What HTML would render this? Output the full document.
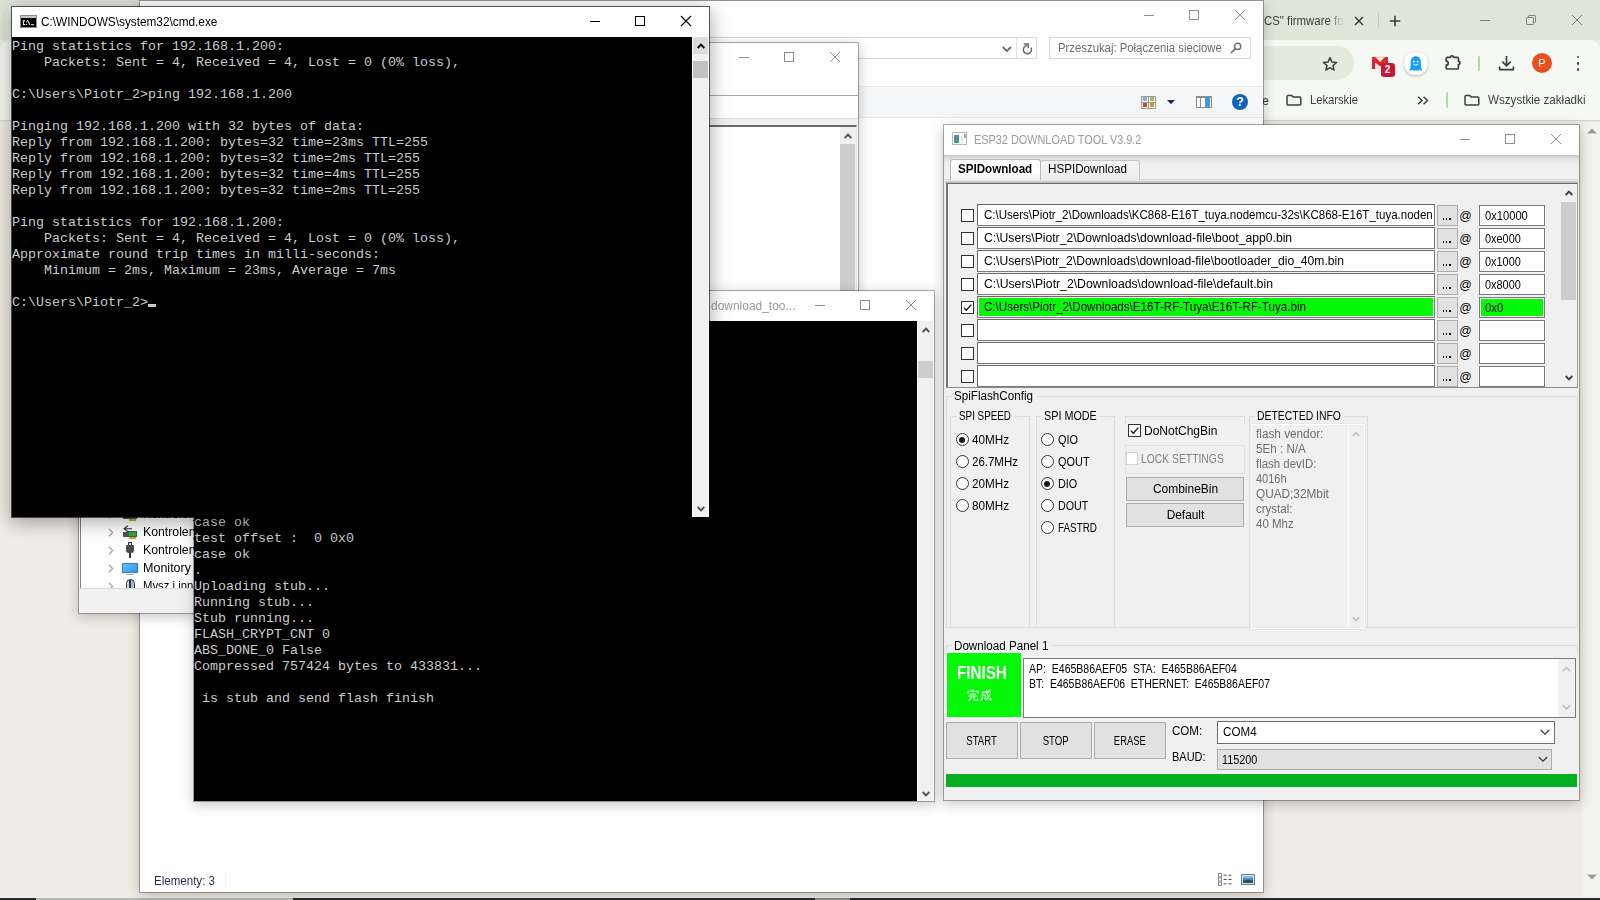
<!DOCTYPE html>
<html>
<head>
<meta charset="utf-8">
<title>desktop</title>
<style>
*{box-sizing:border-box;margin:0;padding:0}
html,body{width:1600px;height:900px;overflow:hidden;background:#f0ede6;font-family:"Liberation Sans",sans-serif;font-size:12px;color:#000}
.abs{position:absolute}
.layer{position:absolute}
.win{position:absolute;box-shadow:0 0 0 1px rgba(0,0,0,.30),0 3px 12px 1px rgba(0,0,0,.22)}
.clip{position:absolute;left:0;top:0;width:100%;height:100%;overflow:hidden}
.t{position:absolute;white-space:pre;font-family:"Liberation Sans",sans-serif}
.mono{font-family:"Liberation Mono",monospace;font-size:13.333px;line-height:16px;color:#ccc;white-space:pre}
svg{position:absolute;overflow:visible}
</style>
</head>
<body>
<div id="chrome" class="layer" style="left:0px;top:0px;width:1600px;height:900px;background:#f0ede6;">
<div class="clip">
<div class="abs" style="left:0px;top:0px;width:1600px;height:40px;background:#dfe6d8;"></div>
<div class="abs" style="left:6px;top:7px;width:240px;height:40px;background:#e9ede4;border-radius:9px 9px 0 0;"></div>
<div class="abs" style="left:0px;top:40px;width:1600px;height:80px;background:#f6f9f3;border-radius:10px 10px 0 0;"></div>
<div class="abs" style="left:0px;top:120px;width:1600px;height:1px;background:#d4d7cf;"></div>
<div class="abs" style="left:0px;top:121px;width:1600px;height:1px;background:#e6e5de;"></div>
<div class="abs" style="left:400px;top:46px;width:954px;height:34px;background:#e4ebdd;border-radius:17px;"></div>
<svg style="left:1322px;top:55.5px" width="16" height="16"><path d="M8 1.6L9.9 6l4.7.4-3.6 3.1 1.1 4.6L8 11.7 3.9 14.1 5 9.5 1.4 6.4 6.1 6z" fill="none" stroke="#3a4236" stroke-width="1.5" stroke-linejoin="round"/></svg>
<div class="t" style="left:1263.50px;top:12.50px;font-size:12.3px;line-height:16px;color:#3a4236;-webkit-mask-image:linear-gradient(90deg,#000 80%,transparent 100%);mask-image:linear-gradient(90deg,#000 80%,transparent 100%);transform:scaleX(0.9277);transform-origin:0 50%;">CS&quot; firmware fo</div>
<svg style="left:1354px;top:16px" width="10" height="10"><path d="M1 1L9 9M9 1L1 9" stroke="#3a4236" stroke-width="1.5"/></svg>
<div class="abs" style="left:1377.5px;top:12.5px;width:1.5px;height:15.5px;background:#c3cbbb;"></div>
<svg style="left:1389px;top:15px" width="12" height="12"><path d="M6 0.7V11.3M0.7 6H11.3" stroke="#3a4236" stroke-width="1.6"/></svg>
<svg style="left:1480px;top:15px" width="10" height="11"><path d="M0 5.5H10" stroke="#7b8475" stroke-width="1"/></svg>
<svg style="left:1526px;top:15px" width="10" height="10"><path d="M2.5 2.5V1.2Q2.5 0.5 3.2 0.5H8.8Q9.5 0.5 9.5 1.2V6.8Q9.5 7.5 8.8 7.5H7.5" fill="none" stroke="#7b8475"/><rect x="0.5" y="2.5" width="7" height="7" rx="0.8" fill="none" stroke="#7b8475"/></svg>
<svg style="left:1572px;top:15px" width="10" height="10"><path d="M0 0L10 10M10 0L0 10" stroke="#7b8475" stroke-width="1"/></svg>
<svg style="left:1372px;top:56.5px" width="16" height="12"><rect x="0.3" y="0.3" width="15.4" height="11.4" fill="#fbf3f3" stroke="#e9b7b7" stroke-width="0.6"/><path d="M0 0H3V12H0ZM13 0H16V12H13Z" fill="#d3222b"/><path d="M0 0H3.2L8 4.9 12.8 0H16V3L8 9.6 0 3Z" fill="#e0262f"/><path d="M3 0.2H13" stroke="#f2b4b4" stroke-width="0.8"/></svg>
<div class="abs" style="left:1380.5px;top:63px;width:14px;height:14px;background:#cc1530;border-radius:3px;"></div>
<div class="t" style="left:1384.72px;top:62.20px;font-size:10px;line-height:16px;font-weight:bold;color:#fff;">2</div>
<div class="abs" style="left:1404px;top:51.5px;width:23.5px;height:23.5px;background:#fff;border-radius:50%;box-shadow:0 1px 3px rgba(0,0,0,.28);"></div>
<svg style="left:1409px;top:55.5px" width="13.5" height="15.5"><path d="M6.75 0.3C3.4 0.3 1.6 2.8 1.6 6V10.3C1.6 12 0.8 13.2 0.2 14.2 1.6 14.8 2.6 14.4 3.3 13.7 4 14.7 5.2 15.1 6.75 14.2 8.3 15.1 9.5 14.7 10.2 13.7 10.9 14.4 11.9 14.8 13.3 14.2 12.7 13.2 11.9 12 11.9 10.3V6C11.9 2.8 10.1 0.3 6.75 0.3Z" fill="#1e9ff2"/><circle cx="4.9" cy="5.6" r="0.9" fill="#fff"/><circle cx="8.6" cy="5.6" r="0.9" fill="#fff"/><path d="M4.3 8.1Q6.75 10.4 9.2 8.1" fill="none" stroke="#fff" stroke-width="0.9"/></svg>
<svg style="left:1444px;top:53px" width="18" height="18"><path d="M2.2 5.4Q2.2 4.4 3.2 4.4H6.3a1.6 1.5 0 0 1 3.2 0H13.4Q14.4 4.4 14.4 5.4V8.3a1.6 1.6 0 0 1 0 3.2V15Q14.4 16 13.4 16H3.2Q2.2 16 2.2 15V12.2a2 2 0 0 0 0-4Z" fill="none" stroke="#3a4236" stroke-width="1.7" stroke-linejoin="round"/></svg>
<div class="abs" style="left:1478.3px;top:55.5px;width:1.8px;height:15.5px;background:#a9e09c;border-radius:1px;"></div>
<svg style="left:1497.5px;top:54.5px" width="17" height="17"><path d="M8.5 1V10.5M4.3 6.6L8.5 10.8 12.7 6.6" fill="none" stroke="#3a4236" stroke-width="1.7"/><path d="M1.6 11.5V14.6H15.4V11.5" fill="none" stroke="#3a4236" stroke-width="1.7" stroke-linejoin="round"/></svg>
<div class="abs" style="left:1532px;top:52.8px;width:20px;height:20px;background:#e8501f;border-radius:50%;"></div>
<div class="t" style="left:1538.33px;top:55.00px;font-size:11px;line-height:16px;color:#fff;">P</div>
<div class="abs" style="left:1576.6px;top:55.6px;width:2.8px;height:2.8px;background:#3a4236;border-radius:50%;"></div>
<div class="abs" style="left:1576.6px;top:61.8px;width:2.8px;height:2.8px;background:#3a4236;border-radius:50%;"></div>
<div class="abs" style="left:1576.6px;top:68px;width:2.8px;height:2.8px;background:#3a4236;border-radius:50%;"></div>
<div class="t" style="left:1262.00px;top:93.00px;font-size:12.3px;line-height:16px;color:#3a4236;">e</div>
<svg style="left:1286px;top:93.8px" width="16" height="12.5"><path d="M1 2.6Q1 1.4 2.2 1.4H5.6L7.3 3.1H13.6Q14.8 3.1 14.8 4.3V9.9Q14.8 11.1 13.6 11.1H2.2Q1 11.1 1 9.9Z" fill="none" stroke="#3a4236" stroke-width="1.5" stroke-linejoin="round"/></svg>
<div class="t" style="left:1310.40px;top:92.00px;font-size:12.3px;line-height:16px;color:#3a4236;transform:scaleX(0.9099);transform-origin:0 50%;">Lekarskie</div>
<svg style="left:1417px;top:96px" width="12" height="9"><path d="M1 0.8L5 4.5 1 8.2M6.5 0.8L10.5 4.5 6.5 8.2" fill="none" stroke="#3a4236" stroke-width="1.5"/></svg>
<div class="abs" style="left:1446.2px;top:92px;width:1.8px;height:15.5px;background:#a9e09c;border-radius:1px;"></div>
<svg style="left:1464px;top:93.8px" width="16" height="12.5"><path d="M1 2.6Q1 1.4 2.2 1.4H5.6L7.3 3.1H13.6Q14.8 3.1 14.8 4.3V9.9Q14.8 11.1 13.6 11.1H2.2Q1 11.1 1 9.9Z" fill="none" stroke="#3a4236" stroke-width="1.5" stroke-linejoin="round"/></svg>
<div class="t" style="left:1488.00px;top:92.00px;font-size:12.3px;line-height:16px;color:#3a4236;transform:scaleX(0.9447);transform-origin:0 50%;">Wszystkie zakładki</div>
<div class="abs" style="left:1583px;top:122px;width:17px;height:776px;background:#f2f2f1;"></div>
<svg style="left:1587px;top:128px" width="10" height="6"><path d="M0 5.5L5 0.5 10 5.5Z" fill="#9b9b98"/></svg>
<svg style="left:1587px;top:874px" width="10" height="6"><path d="M0 0.5L5 5.5 10 0.5Z" fill="#9b9b98"/></svg>
<div class="abs" style="left:0px;top:897.5px;width:1600px;height:2.5px;background:#2b2b2b;"></div>
<div class="abs" style="left:36px;top:897.5px;width:257px;height:2.5px;background:#b9b9b6;"></div>
<div class="abs" style="left:815px;top:897.5px;width:35px;height:2.5px;background:#8a8a88;"></div>
</div>
</div>
<div id="exp" class="win" style="left:140px;top:1px;width:1123px;height:891px;background:#fff;">
<div class="clip">
<svg style="left:1004px;top:9px" width="10" height="11"><path d="M0 5.5H10" stroke="#8e8e8e"/></svg>
<svg style="left:1049px;top:9px" width="10" height="10"><rect x="0.5" y="0.5" width="9" height="9" fill="none" stroke="#8e8e8e"/></svg>
<svg style="left:1095px;top:9px" width="10" height="10"><path d="M0 0L10 10M10 0L0 10" stroke="#8e8e8e"/></svg>
<div class="abs" style="left:360px;top:36px;width:537px;height:22px;background:#fff;border:1px solid #d9d9d9;"></div>
<div class="abs" style="left:876px;top:37px;width:1px;height:20px;background:#e5e5e5;"></div>
<svg style="left:862px;top:45px" width="10" height="7"><path d="M0.8 1L4.9 5 9 1" fill="none" stroke="#6a6a6a" stroke-width="1.8"/></svg>
<svg style="left:880.5px;top:41.5px" width="13" height="13"><path d="M6.4 2.5A4.1 4.1 0 1 0 10 4.6" fill="none" stroke="#6a6a6a" stroke-width="1.5"/><path d="M2.8 1H7.3V5.2" fill="none" stroke="#6a6a6a" stroke-width="1.5"/></svg>
<div class="abs" style="left:909px;top:36px;width:202px;height:22px;background:#fff;border:1px solid #d9d9d9;"></div>
<div class="t" style="left:918.20px;top:39.30px;font-size:12.3px;line-height:16px;color:#6d6d6d;transform:scaleX(0.9215);transform-origin:0 50%;">Przeszukaj: Połączenia sieciowe</div>
<svg style="left:1090px;top:41px" width="12" height="12"><circle cx="7.6" cy="4.4" r="3.1" fill="none" stroke="#6d6d6d" stroke-width="1.5"/><path d="M5.3 6.7L1 11" stroke="#6d6d6d" stroke-width="1.7"/></svg>
<div class="abs" style="left:1px;top:85px;width:1122px;height:32px;background:#f5f6f7;border-top:1px solid #e9eaec;border-bottom:1px solid #e6e7e9;"></div>
<div class="abs" style="left:1001px;top:94.5px;width:15px;height:13px;background:#fff;border:1px solid #9a9a9a;"></div>
<div class="abs" style="left:1008px;top:95px;width:1px;height:12px;background:#9a9a9a;"></div>
<div class="abs" style="left:1002px;top:100.5px;width:13px;height:1px;background:#9a9a9a;"></div>
<div class="abs" style="left:1002.8px;top:96.2px;width:4.4px;height:3.4px;background:#7fb2dc;"></div>
<div class="abs" style="left:1009.8px;top:96.2px;width:4.4px;height:3.4px;background:#a9b765;"></div>
<div class="abs" style="left:1002.8px;top:102.4px;width:4.4px;height:3.4px;background:#d8452c;"></div>
<div class="abs" style="left:1009.8px;top:102.4px;width:4.4px;height:3.4px;background:#c79a30;"></div>
<svg style="left:1026.5px;top:99px" width="8" height="4.5"><path d="M0 0H8L4 4.3Z" fill="#1f2a5c"/></svg>
<div class="abs" style="left:1056px;top:95px;width:16px;height:12px;background:#fff;border:1px solid #8c8c8c;border-top-width:2px;"></div>
<div class="abs" style="left:1060px;top:97px;width:1px;height:9px;background:#8c8c8c;"></div>
<div class="abs" style="left:1065.3px;top:96.2px;width:5px;height:9.8px;background:#3f98e2;"></div>
<div class="abs" style="left:1092px;top:92.8px;width:16.2px;height:16.2px;background:#0f63b6;border-radius:50%;"></div>
<div class="t" style="left:1096.34px;top:93.10px;font-size:12.3px;line-height:16px;font-weight:bold;color:#fff;">?</div>
<div class="t" style="left:14.00px;top:871.50px;font-size:12.3px;line-height:16px;color:#1e2f4f;transform:scaleX(0.9392);transform-origin:0 50%;">Elementy: 3</div>
<div class="abs" style="left:84.5px;top:871px;width:1px;height:16px;background:#f3f3f3;"></div>
<svg style="left:1078px;top:872px" width="16" height="14"><g fill="none" stroke="#8a8a8a" stroke-width="1"><rect x="0.5" y="0.5" width="3" height="3.4"/><rect x="0.5" y="4.8" width="3" height="3.4"/><rect x="0.5" y="9.1" width="3" height="3.4"/></g><path d="M5.5 2.2H8.5M10.5 2.2H13.5M5.5 6.5H8.5M10.5 6.5H13.5M5.5 10.8H8.5M10.5 10.8H13.5" stroke="#4a4a4a" stroke-width="1"/></svg>
<div class="abs" style="left:1101px;top:873px;width:14px;height:11px;background:#cfe3f5;border:1px solid #6f7f8f;"></div>
<div class="abs" style="left:1103px;top:875px;width:10px;height:7px;background:#4d7fae;background:linear-gradient(#9cc3e6 0,#5a8fc0 45%,#2f5a4a 60%,#2a4a6a 100%);"></div>
</div>
</div>
<div id="dev" class="win" style="left:79px;top:43px;width:779px;height:570px;background:#fff;">
<div class="clip">
<svg style="left:660px;top:9px" width="10" height="11"><path d="M0 5.5H10" stroke="#8e8e8e"/></svg>
<svg style="left:705px;top:9px" width="10" height="10"><rect x="0.5" y="0.5" width="9" height="9" fill="none" stroke="#8e8e8e"/></svg>
<svg style="left:751px;top:9px" width="10" height="10"><path d="M0 0L10 10M10 0L0 10" stroke="#8e8e8e"/></svg>
<div class="abs" style="left:0px;top:52px;width:779px;height:1px;background:#a8a8a8;"></div>
<div class="abs" style="left:0px;top:75px;width:779px;height:1px;background:#dcdcdc;"></div>
<div class="abs" style="left:0px;top:76px;width:779px;height:7px;background:#f0f0f0;"></div>
<div class="abs" style="left:1px;top:82px;width:777px;height:463px;background:#fff;border-top:2px solid #6b6b6b;border-left:1px solid #828282;border-right:1px solid #e3e3e3;"></div>
<div class="abs" style="left:761px;top:84px;width:16px;height:461px;background:#f0f0f0;"></div>
<div class="abs" style="left:761.3px;top:101px;width:14.6px;height:300px;background:#cdcdcd;"></div>
<svg style="left:765px;top:90.2px" width="8" height="6"><path d="M0.7 5L4 1.7L7.3 5" fill="none" stroke="#505050" stroke-width="1.9"/></svg>
<div class="abs" style="left:0px;top:545px;width:779px;height:25px;background:#f0f0f0;border-top:1px solid #dadada;"></div>
<svg style="left:29px;top:467px" width="6" height="9"><path d="M1 0.8L4.6 4.5 1 8.2" fill="none" stroke="#a6a6a6" stroke-width="1.3"/></svg>
<svg style="left:29px;top:485px" width="6" height="9"><path d="M1 0.8L4.6 4.5 1 8.2" fill="none" stroke="#a6a6a6" stroke-width="1.3"/></svg>
<svg style="left:29px;top:503px" width="6" height="9"><path d="M1 0.8L4.6 4.5 1 8.2" fill="none" stroke="#a6a6a6" stroke-width="1.3"/></svg>
<svg style="left:29px;top:521px" width="6" height="9"><path d="M1 0.8L4.6 4.5 1 8.2" fill="none" stroke="#a6a6a6" stroke-width="1.3"/></svg>
<svg style="left:29px;top:539px" width="6" height="9"><path d="M1 0.8L4.6 4.5 1 8.2" fill="none" stroke="#a6a6a6" stroke-width="1.3"/></svg>
<div class="t" style="left:64.40px;top:463.30px;font-size:12.3px;line-height:16px;color:#000;transform:scaleX(0.9972);transform-origin:0 50%;">Kontrolery</div>
<div class="t" style="left:64.40px;top:481.30px;font-size:12.3px;line-height:16px;color:#000;transform:scaleX(0.9972);transform-origin:0 50%;">Kontrolery</div>
<div class="t" style="left:64.40px;top:499.30px;font-size:12.3px;line-height:16px;color:#000;transform:scaleX(0.9972);transform-origin:0 50%;">Kontrolery</div>
<div class="t" style="left:64.40px;top:517.30px;font-size:12.3px;line-height:16px;color:#000;transform:scaleX(1.0177);transform-origin:0 50%;">Monitory</div>
<div class="t" style="left:64.40px;top:535.30px;font-size:12.3px;line-height:16px;color:#000;transform:scaleX(0.9201);transform-origin:0 50%;">Mysz i inne</div>
<div class="abs" style="left:49px;top:470px;width:9px;height:6px;background:#3d9a5a;border:1px solid #2a6e3f;"></div>
<div class="abs" style="left:50px;top:476px;width:7px;height:2px;background:#e0a020;"></div>
<div class="abs" style="left:44px;top:471px;width:5px;height:5px;background:#555;"></div>
<svg style="left:44px;top:463.5px" width="10" height="8"><path d="M5 0.7L1 3.7 5 6.7M1.5 3.7H9" fill="none" stroke="#333" stroke-width="1.1"/></svg>
<div class="abs" style="left:49px;top:488px;width:9px;height:6px;background:#3d9a5a;border:1px solid #2a6e3f;"></div>
<div class="abs" style="left:50px;top:494px;width:7px;height:2px;background:#e0a020;"></div>
<div class="abs" style="left:44px;top:489px;width:5px;height:5px;background:#555;"></div>
<svg style="left:44px;top:481.5px" width="10" height="8"><path d="M5 0.7L1 3.7 5 6.7M1.5 3.7H9" fill="none" stroke="#333" stroke-width="1.1"/></svg>
<div class="abs" style="left:48.5px;top:499px;width:4.6px;height:3.5px;background:#ddd;border:1px solid #333;"></div>
<div class="abs" style="left:47px;top:502px;width:7.6px;height:8px;background:#4a4a4a;border-radius:1px 1px 3px 3px;"></div>
<div class="abs" style="left:49.6px;top:510px;width:2.6px;height:4.5px;background:#333;"></div>
<div class="abs" style="left:43px;top:520px;width:16px;height:10px;background:#3aa0f0;border:1px solid #2b7fd0;background:linear-gradient(135deg,#6cc0ff,#2d93ea);"></div>
<div class="abs" style="left:47px;top:531px;width:8px;height:1px;background:#9aa;"></div>
<div class="abs" style="left:46.5px;top:536px;width:9px;height:14px;background:#cfd6e4;border:1.3px solid #333;border-radius:4.5px 4.5px 0 0;background:linear-gradient(90deg,#cfd6e4 0 33%,#2f3540 33% 60%,#aeb8cc 60%);"></div>
<div class="abs" style="left:2px;top:545px;width:777px;height:25px;background:#f0f0f0;border-top:1px solid #dadada;"></div>
</div>
</div>
<div id="con2" class="win" style="left:194px;top:291px;width:740px;height:510px;background:#fff;">
<div class="clip">
<div class="t" style="left:516.50px;top:7.20px;font-size:12.3px;line-height:16px;color:#999;transform:scaleX(0.9729);transform-origin:0 50%;">download_too...</div>
<svg style="left:621px;top:9px" width="10" height="11"><path d="M0 5.5H10" stroke="#8e8e8e"/></svg>
<svg style="left:666px;top:9px" width="10" height="10"><rect x="0.5" y="0.5" width="9" height="9" fill="none" stroke="#8e8e8e"/></svg>
<svg style="left:712px;top:9px" width="10" height="10"><path d="M0 0L10 10M10 0L0 10" stroke="#8e8e8e"/></svg>
<div class="abs" style="left:0px;top:30px;width:723px;height:480px;background:#000;"></div>
<div class="abs mono" style="left:0;top:224px">case ok
test offset :  0 0x0
case ok
.
Uploading stub...
Running stub...
Stub running...
FLASH_CRYPT_CNT 0
ABS_DONE_0 False
Compressed 757424 bytes to 433831...

 is stub and send flash finish</div>
<div class="abs" style="left:724.2px;top:30px;width:14.8px;height:480px;background:#f0f0f0;"></div>
<div class="abs" style="left:724.2px;top:70px;width:14.8px;height:16.6px;background:#cdcdcd;"></div>
<svg style="left:727.6px;top:36.2px" width="8" height="6"><path d="M0.7 5L4 1.7L7.3 5" fill="none" stroke="#505050" stroke-width="1.9"/></svg>
<svg style="left:727.6px;top:499.5px" width="8" height="6"><path d="M0.7 1L4 4.3L7.3 1" fill="none" stroke="#505050" stroke-width="1.9"/></svg>
</div>
</div>
<div id="esp" class="win" style="left:944px;top:125px;width:635px;height:675px;background:#f0f0f0;">
<div class="clip">
<div class="abs" style="left:0px;top:0px;width:635px;height:30px;background:#fff;"></div>
<div class="abs" style="left:8px;top:7px;width:15px;height:13px;background:#fbfbfb;border:1px solid #b8b8b8;"></div>
<div class="abs" style="left:10px;top:9.5px;width:5px;height:8.5px;background:#4f9a96;background:linear-gradient(#5a8aa8,#3c9c84);"></div>
<div class="abs" style="left:16.5px;top:9.5px;width:2.6px;height:8.5px;background:#e6e6e6;"></div>
<div class="abs" style="left:19.8px;top:9.3px;width:2px;height:4.2px;background:#9aa4a4;"></div>
<div class="t" style="left:29.60px;top:6.50px;font-size:12.3px;line-height:16px;color:#9a9a9a;transform:scaleX(0.8851);transform-origin:0 50%;">ESP32 DOWNLOAD TOOL V3.9.2</div>
<svg style="left:516px;top:9px" width="10" height="11"><path d="M0 5.5H10" stroke="#8e8e8e"/></svg>
<svg style="left:561px;top:9px" width="10" height="10"><rect x="0.5" y="0.5" width="9" height="9" fill="none" stroke="#8e8e8e"/></svg>
<svg style="left:607px;top:9px" width="10" height="10"><path d="M0 0L10 10M10 0L0 10" stroke="#8e8e8e"/></svg>
<div class="abs" style="left:0px;top:30px;width:635px;height:9px;background:linear-gradient(#c6c6c6,#e4e4e4 45%,#f0f0f0);"></div>
<div class="abs" style="left:1px;top:54px;width:633px;height:1px;background:#d9d9d9;"></div>
<div class="abs" style="left:96px;top:35px;width:100px;height:20px;background:#f0f0f0;border:1px solid #c4c4c4;border-bottom:none;border-radius:3px 3px 0 0;background:linear-gradient(#f6f6f6,#ebebeb);"></div>
<div class="abs" style="left:6px;top:34.4px;width:90.5px;height:20.6px;background:#fff;border:1px solid #b8b8b8;border-bottom:none;border-radius:3px 3px 0 0;background:linear-gradient(#fff 55%,#f0f0f0);"></div>
<div class="t" style="left:13.60px;top:36.00px;font-size:12.3px;line-height:16px;font-weight:bold;transform:scaleX(0.9442);transform-origin:0 50%;">SPIDownload</div>
<div class="t" style="left:104.00px;top:36.00px;font-size:12.3px;line-height:16px;transform:scaleX(0.9471);transform-origin:0 50%;">HSPIDownload</div>
<div class="abs" style="left:1px;top:55.2px;width:633px;height:2.4px;background:linear-gradient(rgba(120,120,120,0),rgba(120,120,120,.55));"></div>
<div class="abs" style="left:1.5px;top:57.5px;width:632.5px;height:205px;background:#f0f0f0;border-top:1.5px solid #6e6e6e;border-left:2px solid #767676;border-bottom:1px solid #8c8c8c;border-right:1px solid #9c9c9c;"></div>
<div class="abs" style="left:616.5px;top:60px;width:16.5px;height:201.5px;background:#f0f0f0;"></div>
<div class="abs" style="left:617px;top:76.5px;width:15px;height:98.5px;background:#cdcdcd;"></div>
<svg style="left:620.6px;top:65px" width="8" height="6"><path d="M0.7 5L4 1.7L7.3 5" fill="none" stroke="#404040" stroke-width="1.9"/></svg>
<svg style="left:620.6px;top:250px" width="8" height="6"><path d="M0.7 1L4 4.3L7.3 1" fill="none" stroke="#404040" stroke-width="1.9"/></svg>
<div class="abs" style="left:17px;top:84px;width:13px;height:13px;background:#fff;border:1px solid #333;"></div>
<div class="abs" style="left:33px;top:79.4px;width:457.5px;height:22px;background:#fff;border:1px solid #7a7a7a;border-top-color:#6a6a6a;border-left-color:#6a6a6a;"></div>
<div class="abs" style="left:492.5px;top:80.2px;width:21.5px;height:20.6px;background:#e1e1e1;border:1px solid #adadad;"></div>
<div class="abs" style="left:499px;top:93px;width:1.4px;height:1.6px;background:#000;"></div>
<div class="abs" style="left:502.1px;top:93px;width:1.4px;height:1.6px;background:#000;"></div>
<div class="abs" style="left:505.2px;top:93px;width:1.4px;height:1.6px;background:#000;"></div>
<div class="t" style="left:515.30px;top:82.70px;font-size:12.3px;line-height:16px;">@</div>
<div class="abs" style="left:535px;top:80.1px;width:66px;height:20.8px;background:#fff;border:1px solid #7a7a7a;"></div>
<div class="t" style="left:39.60px;top:82.40px;font-size:12.3px;line-height:16px;transform:scaleX(0.9366);transform-origin:0 50%;">C:\Users\Piotr_2\Downloads\KC868-E16T_tuya.nodemcu-32s\KC868-E16T_tuya.noden</div>
<div class="t" style="left:541.20px;top:82.80px;font-size:12.3px;line-height:16px;transform:scaleX(0.9069);transform-origin:0 50%;">0x10000</div>
<div class="abs" style="left:17px;top:107px;width:13px;height:13px;background:#fff;border:1px solid #333;"></div>
<div class="abs" style="left:33px;top:102.4px;width:457.5px;height:22px;background:#fff;border:1px solid #7a7a7a;border-top-color:#6a6a6a;border-left-color:#6a6a6a;"></div>
<div class="abs" style="left:492.5px;top:103.2px;width:21.5px;height:20.6px;background:#e1e1e1;border:1px solid #adadad;"></div>
<div class="abs" style="left:499px;top:116px;width:1.4px;height:1.6px;background:#000;"></div>
<div class="abs" style="left:502.1px;top:116px;width:1.4px;height:1.6px;background:#000;"></div>
<div class="abs" style="left:505.2px;top:116px;width:1.4px;height:1.6px;background:#000;"></div>
<div class="t" style="left:515.30px;top:105.70px;font-size:12.3px;line-height:16px;">@</div>
<div class="abs" style="left:535px;top:103.1px;width:66px;height:20.8px;background:#fff;border:1px solid #7a7a7a;"></div>
<div class="t" style="left:39.60px;top:105.40px;font-size:12.3px;line-height:16px;transform:scaleX(0.9885);transform-origin:0 50%;">C:\Users\Piotr_2\Downloads\download-file\boot_app0.bin</div>
<div class="t" style="left:541.20px;top:105.80px;font-size:12.3px;line-height:16px;transform:scaleX(0.8872);transform-origin:0 50%;">0xe000</div>
<div class="abs" style="left:17px;top:130px;width:13px;height:13px;background:#fff;border:1px solid #333;"></div>
<div class="abs" style="left:33px;top:125.4px;width:457.5px;height:22px;background:#fff;border:1px solid #7a7a7a;border-top-color:#6a6a6a;border-left-color:#6a6a6a;"></div>
<div class="abs" style="left:492.5px;top:126.2px;width:21.5px;height:20.6px;background:#e1e1e1;border:1px solid #adadad;"></div>
<div class="abs" style="left:499px;top:139px;width:1.4px;height:1.6px;background:#000;"></div>
<div class="abs" style="left:502.1px;top:139px;width:1.4px;height:1.6px;background:#000;"></div>
<div class="abs" style="left:505.2px;top:139px;width:1.4px;height:1.6px;background:#000;"></div>
<div class="t" style="left:515.30px;top:128.70px;font-size:12.3px;line-height:16px;">@</div>
<div class="abs" style="left:535px;top:126.1px;width:66px;height:20.8px;background:#fff;border:1px solid #7a7a7a;"></div>
<div class="t" style="left:39.60px;top:128.40px;font-size:12.3px;line-height:16px;transform:scaleX(0.9842);transform-origin:0 50%;">C:\Users\Piotr_2\Downloads\download-file\bootloader_dio_40m.bin</div>
<div class="t" style="left:541.20px;top:128.80px;font-size:12.3px;line-height:16px;transform:scaleX(0.8872);transform-origin:0 50%;">0x1000</div>
<div class="abs" style="left:17px;top:153px;width:13px;height:13px;background:#fff;border:1px solid #333;"></div>
<div class="abs" style="left:33px;top:148.4px;width:457.5px;height:22px;background:#fff;border:1px solid #7a7a7a;border-top-color:#6a6a6a;border-left-color:#6a6a6a;"></div>
<div class="abs" style="left:492.5px;top:149.2px;width:21.5px;height:20.6px;background:#e1e1e1;border:1px solid #adadad;"></div>
<div class="abs" style="left:499px;top:162px;width:1.4px;height:1.6px;background:#000;"></div>
<div class="abs" style="left:502.1px;top:162px;width:1.4px;height:1.6px;background:#000;"></div>
<div class="abs" style="left:505.2px;top:162px;width:1.4px;height:1.6px;background:#000;"></div>
<div class="t" style="left:515.30px;top:151.70px;font-size:12.3px;line-height:16px;">@</div>
<div class="abs" style="left:535px;top:149.1px;width:66px;height:20.8px;background:#fff;border:1px solid #7a7a7a;"></div>
<div class="t" style="left:39.60px;top:151.40px;font-size:12.3px;line-height:16px;transform:scaleX(0.9946);transform-origin:0 50%;">C:\Users\Piotr_2\Downloads\download-file\default.bin</div>
<div class="t" style="left:541.20px;top:151.80px;font-size:12.3px;line-height:16px;transform:scaleX(0.8872);transform-origin:0 50%;">0x8000</div>
<div class="abs" style="left:17px;top:176px;width:13px;height:13px;background:#fff;border:1px solid #333;"></div>
<svg style="left:17px;top:176px" width="13" height="13"><path d="M2.8 6.6L5.3 9.2 10.3 3.6" fill="none" stroke="#111" stroke-width="1.3"/></svg>
<div class="abs" style="left:33px;top:171.4px;width:457.5px;height:22px;background:#04f808;border:1px solid #7a7a7a;border-top-color:#6a6a6a;border-left-color:#6a6a6a;box-shadow:inset 0 0 0 1px #fff;"></div>
<div class="abs" style="left:492.5px;top:172.2px;width:21.5px;height:20.6px;background:#e1e1e1;border:1px solid #adadad;"></div>
<div class="abs" style="left:499px;top:185px;width:1.4px;height:1.6px;background:#000;"></div>
<div class="abs" style="left:502.1px;top:185px;width:1.4px;height:1.6px;background:#000;"></div>
<div class="abs" style="left:505.2px;top:185px;width:1.4px;height:1.6px;background:#000;"></div>
<div class="t" style="left:515.30px;top:174.70px;font-size:12.3px;line-height:16px;">@</div>
<div class="abs" style="left:535px;top:172.1px;width:66px;height:20.8px;background:#04f808;border:1px solid #7a7a7a;box-shadow:inset 0 0 0 1px #fff;"></div>
<div class="t" style="left:39.60px;top:174.40px;font-size:12.3px;line-height:16px;transform:scaleX(0.9427);transform-origin:0 50%;">C:\Users\Piotr_2\Downloads\E16T-RF-Tuya\E16T-RF-Tuya.bin</div>
<div class="t" style="left:541.20px;top:174.80px;font-size:12.3px;line-height:16px;transform:scaleX(0.9228);transform-origin:0 50%;">0x0</div>
<div class="abs" style="left:17px;top:199px;width:13px;height:13px;background:#fff;border:1px solid #333;"></div>
<div class="abs" style="left:33px;top:194.4px;width:457.5px;height:22px;background:#fff;border:1px solid #7a7a7a;border-top-color:#6a6a6a;border-left-color:#6a6a6a;"></div>
<div class="abs" style="left:492.5px;top:195.2px;width:21.5px;height:20.6px;background:#e1e1e1;border:1px solid #adadad;"></div>
<div class="abs" style="left:499px;top:208px;width:1.4px;height:1.6px;background:#000;"></div>
<div class="abs" style="left:502.1px;top:208px;width:1.4px;height:1.6px;background:#000;"></div>
<div class="abs" style="left:505.2px;top:208px;width:1.4px;height:1.6px;background:#000;"></div>
<div class="t" style="left:515.30px;top:197.70px;font-size:12.3px;line-height:16px;">@</div>
<div class="abs" style="left:535px;top:195.1px;width:66px;height:20.8px;background:#fff;border:1px solid #7a7a7a;"></div>
<div class="abs" style="left:17px;top:222px;width:13px;height:13px;background:#fff;border:1px solid #333;"></div>
<div class="abs" style="left:33px;top:217.4px;width:457.5px;height:22px;background:#fff;border:1px solid #7a7a7a;border-top-color:#6a6a6a;border-left-color:#6a6a6a;"></div>
<div class="abs" style="left:492.5px;top:218.2px;width:21.5px;height:20.6px;background:#e1e1e1;border:1px solid #adadad;"></div>
<div class="abs" style="left:499px;top:231px;width:1.4px;height:1.6px;background:#000;"></div>
<div class="abs" style="left:502.1px;top:231px;width:1.4px;height:1.6px;background:#000;"></div>
<div class="abs" style="left:505.2px;top:231px;width:1.4px;height:1.6px;background:#000;"></div>
<div class="t" style="left:515.30px;top:220.70px;font-size:12.3px;line-height:16px;">@</div>
<div class="abs" style="left:535px;top:218.1px;width:66px;height:20.8px;background:#fff;border:1px solid #7a7a7a;"></div>
<div class="abs" style="left:17px;top:245px;width:13px;height:13px;background:#fff;border:1px solid #333;"></div>
<div class="abs" style="left:33px;top:240.4px;width:457.5px;height:22px;background:#fff;border:1px solid #7a7a7a;border-top-color:#6a6a6a;border-left-color:#6a6a6a;"></div>
<div class="abs" style="left:492.5px;top:241.2px;width:21.5px;height:20.6px;background:#e1e1e1;border:1px solid #adadad;"></div>
<div class="abs" style="left:499px;top:254px;width:1.4px;height:1.6px;background:#000;"></div>
<div class="abs" style="left:502.1px;top:254px;width:1.4px;height:1.6px;background:#000;"></div>
<div class="abs" style="left:505.2px;top:254px;width:1.4px;height:1.6px;background:#000;"></div>
<div class="t" style="left:515.30px;top:243.70px;font-size:12.3px;line-height:16px;">@</div>
<div class="abs" style="left:535px;top:241.1px;width:66px;height:20.8px;background:#fff;border:1px solid #7a7a7a;"></div>
<div class="abs" style="left:1.5px;top:261.5px;width:632.5px;height:9px;background:#f0f0f0;border-top:1px solid #8c8c8c;"></div>
<div class="abs" style="left:2px;top:270.5px;width:631.5px;height:232.5px;border:1px solid #dcdcdc;"></div>
<div class="abs" style="left:7.5px;top:265px;width:84px;height:12px;background:#f0f0f0;"></div>
<div class="t" style="left:10.00px;top:263.20px;font-size:12.3px;line-height:16px;transform:scaleX(0.9471);transform-origin:0 50%;">SpiFlashConfig</div>
<div class="abs" style="left:6.4px;top:291px;width:79.2px;height:213px;border:1px solid #dcdcdc;border-bottom:none;"></div>
<div class="abs" style="left:12.5px;top:285px;width:57.5px;height:12px;background:#f0f0f0;"></div>
<div class="t" style="left:15.00px;top:283.30px;font-size:12.3px;line-height:16px;transform:scaleX(0.8007);transform-origin:0 50%;">SPI SPEED</div>
<div class="abs" style="left:91.6px;top:291px;width:79px;height:213px;border:1px solid #dcdcdc;border-bottom:none;"></div>
<div class="abs" style="left:97.5px;top:285px;width:58.3px;height:12px;background:#f0f0f0;"></div>
<div class="t" style="left:100.00px;top:283.30px;font-size:12.3px;line-height:16px;transform:scaleX(0.8779);transform-origin:0 50%;">SPI MODE</div>
<div class="abs" style="left:181px;top:291px;width:120px;height:8px;border:1px solid #dcdcdc;border-bottom:none;"></div>
<div class="abs" style="left:304.5px;top:291px;width:119px;height:213px;border:1px solid #dcdcdc;border-bottom:none;"></div>
<div class="abs" style="left:310.5px;top:285px;width:89.5px;height:12px;background:#f0f0f0;"></div>
<div class="t" style="left:313.00px;top:283.30px;font-size:12.3px;line-height:16px;transform:scaleX(0.8478);transform-origin:0 50%;">DETECTED INFO</div>
<div class="abs" style="left:2px;top:502.4px;width:631.5px;height:1px;background:#dcdcdc;"></div>
<div class="abs" style="left:3px;top:503.4px;width:630px;height:16px;background:#f0f0f0;"></div>
<div class="abs" style="left:11.7px;top:308px;width:13px;height:13px;background:#fff;border:1px solid #333;border-radius:50%;"></div>
<div class="abs" style="left:15.2px;top:311.5px;width:6px;height:6px;background:#1a1a1a;border-radius:50%;"></div>
<div class="t" style="left:28.20px;top:306.70px;font-size:12.3px;line-height:16px;transform:scaleX(0.9523);transform-origin:0 50%;">40MHz</div>
<div class="abs" style="left:11.7px;top:330px;width:13px;height:13px;background:#fff;border:1px solid #333;border-radius:50%;"></div>
<div class="t" style="left:28.20px;top:328.70px;font-size:12.3px;line-height:16px;transform:scaleX(0.9346);transform-origin:0 50%;">26.7MHz</div>
<div class="abs" style="left:11.7px;top:352px;width:13px;height:13px;background:#fff;border:1px solid #333;border-radius:50%;"></div>
<div class="t" style="left:28.20px;top:350.70px;font-size:12.3px;line-height:16px;transform:scaleX(0.9523);transform-origin:0 50%;">20MHz</div>
<div class="abs" style="left:11.7px;top:374px;width:13px;height:13px;background:#fff;border:1px solid #333;border-radius:50%;"></div>
<div class="t" style="left:28.20px;top:372.70px;font-size:12.3px;line-height:16px;transform:scaleX(0.9523);transform-origin:0 50%;">80MHz</div>
<div class="abs" style="left:96.9px;top:308px;width:13px;height:13px;background:#fff;border:1px solid #333;border-radius:50%;"></div>
<div class="t" style="left:113.60px;top:306.70px;font-size:12.3px;line-height:16px;transform:scaleX(0.8868);transform-origin:0 50%;">QIO</div>
<div class="abs" style="left:96.9px;top:330px;width:13px;height:13px;background:#fff;border:1px solid #333;border-radius:50%;"></div>
<div class="t" style="left:113.60px;top:328.70px;font-size:12.3px;line-height:16px;transform:scaleX(0.8894);transform-origin:0 50%;">QOUT</div>
<div class="abs" style="left:96.9px;top:352px;width:13px;height:13px;background:#fff;border:1px solid #333;border-radius:50%;"></div>
<div class="abs" style="left:100.4px;top:355.5px;width:6px;height:6px;background:#1a1a1a;border-radius:50%;"></div>
<div class="t" style="left:113.60px;top:350.70px;font-size:12.3px;line-height:16px;transform:scaleX(0.8780);transform-origin:0 50%;">DIO</div>
<div class="abs" style="left:96.9px;top:374px;width:13px;height:13px;background:#fff;border:1px solid #333;border-radius:50%;"></div>
<div class="t" style="left:113.60px;top:372.70px;font-size:12.3px;line-height:16px;transform:scaleX(0.8724);transform-origin:0 50%;">DOUT</div>
<div class="abs" style="left:96.9px;top:396px;width:13px;height:13px;background:#fff;border:1px solid #333;border-radius:50%;"></div>
<div class="t" style="left:113.60px;top:394.70px;font-size:12.3px;line-height:16px;transform:scaleX(0.8038);transform-origin:0 50%;">FASTRD</div>
<div class="abs" style="left:184px;top:299.4px;width:13px;height:13px;background:#fff;border:1px solid #333;"></div>
<svg style="left:184px;top:299.4px" width="13" height="13"><path d="M2.8 6.6L5.3 9.2 10.3 3.6" fill="none" stroke="#111" stroke-width="1.3"/></svg>
<div class="t" style="left:200.40px;top:298.00px;font-size:12.3px;line-height:16px;transform:scaleX(0.9760);transform-origin:0 50%;">DoNotChgBin</div>
<div class="abs" style="left:181.4px;top:320px;width:119.4px;height:29.4px;border:1px solid #e0e0e0;"></div>
<div class="abs" style="left:181.6px;top:327.4px;width:12.6px;height:12.6px;background:#fff;border:1px solid #d4d4d4;"></div>
<div class="t" style="left:197.20px;top:325.90px;font-size:12.3px;line-height:16px;color:#838383;transform:scaleX(0.8413);transform-origin:0 50%;">LOCK SETTINGS</div>
<div class="abs" style="left:182px;top:352.4px;width:118.4px;height:23.2px;background:#e1e1e1;border:1px solid #adadad;"></div>
<div class="t" style="left:207.70px;top:356.00px;font-size:12.3px;line-height:16px;transform:scaleX(0.9731);transform-origin:50% 50%;">CombineBin</div>
<div class="abs" style="left:182px;top:378.4px;width:118.4px;height:23.2px;background:#e1e1e1;border:1px solid #adadad;"></div>
<div class="t" style="left:221.71px;top:382.00px;font-size:12.3px;line-height:16px;transform:scaleX(0.9648);transform-origin:50% 50%;">Default</div>
<div class="abs" style="left:306.6px;top:298.5px;width:114.8px;height:205px;background:#f0f0f0;border:1px solid #fff;box-shadow:0 0 0 0.5px #dedede;"></div>
<div class="abs" style="left:403.6px;top:299.5px;width:1px;height:203px;background:#fbfbfb;"></div>
<svg style="left:407.5px;top:306px" width="8" height="6"><path d="M0.8 4.8L4 1.6 7.2 4.8" fill="none" stroke="#bcbcbc" stroke-width="1.4"/></svg>
<svg style="left:407.5px;top:490.5px" width="8" height="6"><path d="M0.8 1.2L4 4.4 7.2 1.2" fill="none" stroke="#bcbcbc" stroke-width="1.4"/></svg>
<div class="t" style="left:312.20px;top:301.20px;font-size:12.3px;line-height:16px;color:#6d6d6d;transform:scaleX(0.9570);transform-origin:0 50%;">flash vendor:</div>
<div class="t" style="left:312.20px;top:316.20px;font-size:12.3px;line-height:16px;color:#6d6d6d;transform:scaleX(0.9460);transform-origin:0 50%;">5Eh : N/A</div>
<div class="t" style="left:312.20px;top:331.20px;font-size:12.3px;line-height:16px;color:#6d6d6d;transform:scaleX(0.9300);transform-origin:0 50%;">flash devID:</div>
<div class="t" style="left:312.20px;top:346.20px;font-size:12.3px;line-height:16px;color:#6d6d6d;transform:scaleX(0.8946);transform-origin:0 50%;">4016h</div>
<div class="t" style="left:312.20px;top:361.20px;font-size:12.3px;line-height:16px;color:#6d6d6d;transform:scaleX(0.9595);transform-origin:0 50%;">QUAD;32Mbit</div>
<div class="t" style="left:312.20px;top:376.20px;font-size:12.3px;line-height:16px;color:#6d6d6d;transform:scaleX(0.9344);transform-origin:0 50%;">crystal:</div>
<div class="t" style="left:312.20px;top:391.20px;font-size:12.3px;line-height:16px;color:#6d6d6d;transform:scaleX(0.9371);transform-origin:0 50%;">40 Mhz</div>
<div class="abs" style="left:2px;top:520.3px;width:631.5px;height:8px;border:1px solid #dcdcdc;border-bottom:none;"></div>
<div class="abs" style="left:7.5px;top:515px;width:99.5px;height:12px;background:#f0f0f0;"></div>
<div class="t" style="left:10.00px;top:513.00px;font-size:12.3px;line-height:16px;transform:scaleX(0.9456);transform-origin:0 50%;">Download Panel 1</div>
<div class="abs" style="left:3px;top:528px;width:74px;height:64.4px;background:#04f808;"></div>
<div class="t" style="left:12.60px;top:536.00px;font-size:19px;line-height:24px;font-weight:bold;color:#fff;transform:scaleX(0.7996);transform-origin:0 50%;">FINISH</div>
<svg style="left:23px;top:563.5px" width="12" height="12"><path d="M6 0.4V1.8M1 4.3V2.3H11V4.3M3.4 5H8.6M1.8 7H10.2M4.8 7Q4.6 10 1.3 11.4M7 7V10.4Q7 11.3 8 11.3H10.6V9.8" fill="none" stroke="#f4fff4" stroke-width="1.05" stroke-linecap="round" stroke-linejoin="round"/></svg>
<svg style="left:36.3px;top:563.5px" width="12" height="12"><path d="M2.4 3H10.6M2.4 3V7Q2.4 10 0.9 11.4M2.4 6H5.4V9Q5.4 9.9 4.2 9.5M6.5 0.5Q6.8 7.2 10.6 11.4L11.1 9.4M10 5Q8.6 9 5.6 11.4M8.6 0.8L10 2" fill="none" stroke="#f4fff4" stroke-width="1.05" stroke-linecap="round" stroke-linejoin="round"/></svg>
<div class="abs" style="left:79px;top:533px;width:553px;height:59.6px;background:#fff;border:1px solid #7a7a7a;"></div>
<div class="t" style="left:85.20px;top:535.60px;font-size:12.3px;line-height:16px;transform:scaleX(0.8545);transform-origin:0 50%;">AP:  E465B86AEF05  STA:  E465B86AEF04</div>
<div class="t" style="left:85.20px;top:550.80px;font-size:12.3px;line-height:16px;transform:scaleX(0.8515);transform-origin:0 50%;">BT:  E465B86AEF06  ETHERNET:  E465B86AEF07</div>
<div class="abs" style="left:614px;top:534px;width:17px;height:57.6px;background:#f0f0f0;"></div>
<svg style="left:618px;top:541px" width="9" height="7"><path d="M0.8 5.2L4.5 1.5 8.2 5.2" fill="none" stroke="#bcbcbc" stroke-width="1.5"/></svg>
<svg style="left:618px;top:578.5px" width="9" height="7"><path d="M0.8 1.2L4.5 4.9 8.2 1.2" fill="none" stroke="#bcbcbc" stroke-width="1.5"/></svg>
<div class="abs" style="left:2.4px;top:597.4px;width:71.2px;height:37px;background:#e1e1e1;border:1px solid #adadad;"></div>
<div class="t" style="left:18.41px;top:608.00px;font-size:12.3px;line-height:16px;transform:scaleX(0.7810);transform-origin:50% 50%;">START</div>
<div class="abs" style="left:76.4px;top:597.4px;width:71.2px;height:37px;background:#e1e1e1;border:1px solid #adadad;"></div>
<div class="t" style="left:95.37px;top:608.00px;font-size:12.3px;line-height:16px;transform:scaleX(0.7816);transform-origin:50% 50%;">STOP</div>
<div class="abs" style="left:150.4px;top:597.4px;width:71.2px;height:37px;background:#e1e1e1;border:1px solid #adadad;"></div>
<div class="t" style="left:165.15px;top:608.00px;font-size:12.3px;line-height:16px;transform:scaleX(0.7674);transform-origin:50% 50%;">ERASE</div>
<div class="t" style="left:228.40px;top:598.00px;font-size:12.3px;line-height:16px;transform:scaleX(0.9404);transform-origin:0 50%;">COM:</div>
<div class="t" style="left:228.40px;top:624.00px;font-size:12.3px;line-height:16px;transform:scaleX(0.8938);transform-origin:0 50%;">BAUD:</div>
<div class="abs" style="left:273px;top:596.4px;width:337.6px;height:22.2px;background:#fff;border:1px solid #6e6e6e;"></div>
<div class="t" style="left:279.40px;top:599.30px;font-size:12.3px;line-height:16px;transform:scaleX(0.9455);transform-origin:0 50%;">COM4</div>
<svg style="left:596px;top:603.5px" width="10" height="7"><path d="M0.8 1L5 5.2 9.2 1" fill="none" stroke="#333" stroke-width="1.2"/></svg>
<div class="abs" style="left:273px;top:624.2px;width:334.6px;height:20.4px;background:#e1e1e1;border:1px solid #adadad;"></div>
<div class="t" style="left:277.60px;top:627.20px;font-size:12.3px;line-height:16px;transform:scaleX(0.8821);transform-origin:0 50%;">115200</div>
<svg style="left:593.5px;top:631px" width="10" height="7"><path d="M0.8 1L5 5.2 9.2 1" fill="none" stroke="#333" stroke-width="1.2"/></svg>
<div class="abs" style="left:2px;top:649px;width:631px;height:13px;background:#06b025;"></div>
</div>
</div>
<div id="cmd" class="win" style="left:12px;top:7px;width:697px;height:510px;background:#fff;box-shadow:0 0 0 1px rgba(0,0,0,.62),0 4px 18px 2px rgba(0,0,0,.32);">
<div class="clip">
<svg style="left:8px;top:8px" width="17" height="13" viewBox="0 0 17 13"><rect x="0" y="0" width="17" height="13" fill="#000"/><rect x="0.5" y="0.5" width="16" height="12" fill="none" stroke="#8a8a8a"/><rect x="1" y="1" width="15" height="2" fill="#c8c8c8"/><path d="M3 5.3H5.2V6.3H3.9V9H5.2V10H3ZM6.2 6.2H7.2V7.2H6.2ZM6.2 8.9H7.2V9.9H6.2ZM8 5L10.4 10H9.4L7 5ZM11 9.3H14V10.2H11Z" fill="#fff"/></svg>
<div class="t" style="left:29.20px;top:7.20px;font-size:12.3px;line-height:16px;transform:scaleX(0.9595);transform-origin:0 50%;">C:\WINDOWS\system32\cmd.exe</div>
<svg style="left:578px;top:9px" width="10" height="11"><path d="M0 5.5H10" stroke="#000"/></svg>
<svg style="left:623px;top:9px" width="10" height="10"><rect x="0.5" y="0.5" width="9" height="9" fill="none" stroke="#000"/></svg>
<svg style="left:669px;top:9px" width="10" height="10"><path d="M0 0L10 10M10 0L0 10" stroke="#000" stroke-width="1.1"/></svg>
<div class="abs" style="left:0px;top:30px;width:680px;height:480px;background:#000;"></div>
<div class="abs mono" style="left:0;top:32px">Ping statistics for 192.168.1.200:
    Packets: Sent = 4, Received = 4, Lost = 0 (0% loss),

C:\Users\Piotr_2&gt;ping 192.168.1.200

Pinging 192.168.1.200 with 32 bytes of data:
Reply from 192.168.1.200: bytes=32 time=23ms TTL=255
Reply from 192.168.1.200: bytes=32 time=2ms TTL=255
Reply from 192.168.1.200: bytes=32 time=4ms TTL=255
Reply from 192.168.1.200: bytes=32 time=2ms TTL=255

Ping statistics for 192.168.1.200:
    Packets: Sent = 4, Received = 4, Lost = 0 (0% loss),
Approximate round trip times in milli-seconds:
    Minimum = 2ms, Maximum = 23ms, Average = 7ms

C:\Users\Piotr_2&gt;</div>
<div class="abs" style="left:136px;top:297px;width:8px;height:3px;background:#ccc;"></div>
<div class="abs" style="left:681px;top:30px;width:15px;height:480px;background:#f0f0f0;"></div>
<div class="abs" style="left:681px;top:30px;width:15px;height:17px;background:#dadada;"></div>
<div class="abs" style="left:681px;top:54px;width:15px;height:16.6px;background:#c1c1c1;"></div>
<svg style="left:684.5px;top:36px" width="8" height="6"><path d="M0.7 5L4 1.7L7.3 5" fill="none" stroke="#000" stroke-width="1.9"/></svg>
<svg style="left:684.5px;top:499px" width="8" height="6"><path d="M0.7 1L4 4.3L7.3 1" fill="none" stroke="#505050" stroke-width="1.9"/></svg>
</div>
</div>
</body>
</html>
